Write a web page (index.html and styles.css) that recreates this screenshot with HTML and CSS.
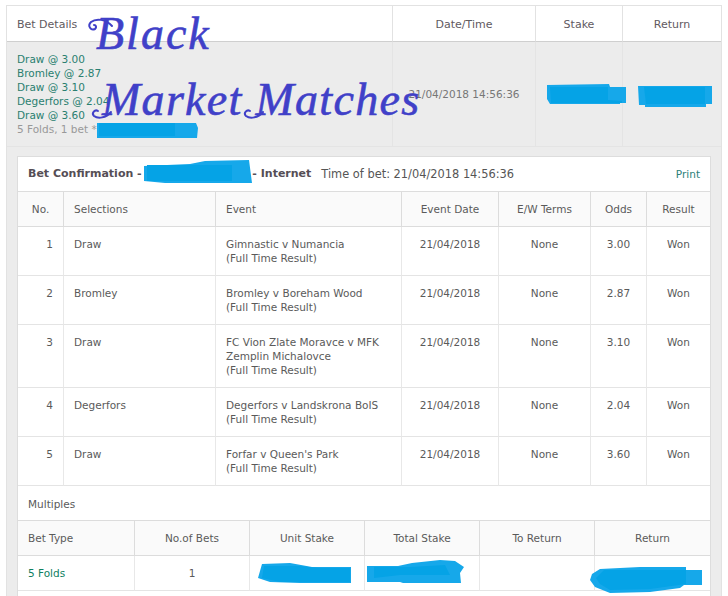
FILE: index.html
```html
<!DOCTYPE html>
<html lang="en">
<head>
<meta charset="utf-8">
<title>Bet Details</title>
<link rel="stylesheet" href="styles.css">
</head>
<body>
<main class="page">
  <table class="summary">
    <colgroup><col class="s1"><col class="s2"><col class="s3"><col class="s4"></colgroup>
    <thead>
      <tr><th class="left">Bet Details</th><th>Date/Time</th><th>Stake</th><th>Return</th></tr>
    </thead>
    <tbody>
      <tr>
        <td class="legs">
          <div class="leg">Draw @ 3.00</div>
          <div class="leg">Bromley @ 2.87</div>
          <div class="leg">Draw @ 3.10</div>
          <div class="leg">Degerfors @ 2.04</div>
          <div class="leg">Draw @ 3.60</div>
          <div class="folds">5 Folds, 1 bet *</div>
        </td>
        <td class="when">21/04/2018 14:56:36</td>
        <td></td>
        <td></td>
      </tr>
    </tbody>
  </table>

  <section class="panel">
    <header class="panel-title">
      <strong class="bet-name">Bet Confirmation - <span class="hidden-id"></span> - Internet</strong>
      <span class="bet-time">Time of bet: 21/04/2018 14:56:36</span>
      <a class="print">Print</a>
    </header>

    <table class="grid">
      <colgroup><col class="c1"><col class="c2"><col class="c3"><col class="c4"><col class="c5"><col class="c6"><col class="c7"></colgroup>
      <thead>
        <tr><th>No.</th><th class="left">Selections</th><th class="left">Event</th><th>Event Date</th><th>E/W Terms</th><th>Odds</th><th>Result</th></tr>
      </thead>
      <tbody>
        <tr><td class="num">1</td><td>Draw</td><td>Gimnastic v Numancia<br>(Full Time Result)</td><td class="mid">21/04/2018</td><td class="mid">None</td><td class="mid">3.00</td><td class="mid">Won</td></tr>
        <tr><td class="num">2</td><td>Bromley</td><td>Bromley v Boreham Wood<br>(Full Time Result)</td><td class="mid">21/04/2018</td><td class="mid">None</td><td class="mid">2.87</td><td class="mid">Won</td></tr>
        <tr><td class="num">3</td><td>Draw</td><td>FC Vion Zlate Moravce v MFK Zemplin Michalovce<br>(Full Time Result)</td><td class="mid">21/04/2018</td><td class="mid">None</td><td class="mid">3.10</td><td class="mid">Won</td></tr>
        <tr><td class="num">4</td><td>Degerfors</td><td>Degerfors v Landskrona BoIS<br>(Full Time Result)</td><td class="mid">21/04/2018</td><td class="mid">None</td><td class="mid">2.04</td><td class="mid">Won</td></tr>
        <tr><td class="num">5</td><td>Draw</td><td>Forfar v Queen's Park<br>(Full Time Result)</td><td class="mid">21/04/2018</td><td class="mid">None</td><td class="mid">3.60</td><td class="mid">Won</td></tr>
      </tbody>
    </table>

    <div class="multiples">Multiples</div>

    <table class="grid">
      <colgroup><col class="m1"><col class="m2"><col class="m2"><col class="m2"><col class="m2"><col class="m2"></colgroup>
      <thead>
        <tr><th class="left">Bet Type</th><th>No.of Bets</th><th>Unit Stake</th><th>Total Stake</th><th>To Return</th><th>Return</th></tr>
      </thead>
      <tbody>
        <tr><td class="green">5 Folds</td><td class="mid">1</td><td></td><td></td><td></td><td></td></tr>
      </tbody>
    </table>
  </section>
</main>

<div class="watermark">
  <span class="wm-black">Black</span>
  <span class="wm-market">Market Matches</span>
</div>

<svg class="scribbles" width="728" height="596" viewBox="0 0 728 596" aria-hidden="true">
  <g class="ink-light">
    <path d="M97 123H196L198 128L197 138H97Z"/>
    <path d="M144 166L190 164L205 161L249 160L252 183H165L144 181Z"/>
    <path d="M547 85L609 84L610 87H626V103H620V104H550L547 99Z"/>
    <path d="M638 86H712V104H706V107H645V105H639Z"/>
    <path d="M262 564L290 563L312 567H351V583H300L270 582L258 578Z"/>
    <path d="M367 566H398L412 563L440 560L455 561L464 567L460 573L461 583H403L400 582H367Z"/>
    <path d="M600 569L640 567H686V570H702V585H684L680 588L650 592L610 593L595 587L590 580L592 574Z"/>
  </g>
  <g class="ink-dark">
    <path d="M99 123H175V136H99Z"/>
    <path d="M147 165H232V181H147Z"/>
    <path d="M550 87H608V100L622 101V103H551Z"/>
    <path d="M644 87H705V104H646Z"/>
    <path d="M264 566H300L318 568H350V582H280L262 578Z"/>
    <path d="M374 567H410L445 565L450 575H400L374 578Z"/>
    <path d="M604 570H686V584L650 589L610 590L600 584L596 578Z"/>
  </g>
  <g class="swash">
    <path d="M112 26C106 19 96 18 91 22C87 26 91 31 95 29C97 27 96 25 94 25"/>
    <path d="M111 112C106 118 98 119 94 116C91 113 95 109 98 111"/>
    <path d="M263 112C258 118 250 119 246 116C243 113 247 109 250 111"/>
  </g>
</svg>
</body>
</html>
```

FILE: styles.css
```css
* {
  box-sizing: border-box;
}

html,
body {
  margin: 0;
  height: 596px;
  overflow: hidden;
  background: #fff;
}

body {
  position: relative;
  font-family: "DejaVu Sans", Verdana, sans-serif;
  font-size: 10.5px;
  line-height: 14px;
  color: #5a5a5a;
}

.page {
  width: 716px;
  height: 591px;
  margin: 5px 0 0 6px;
  background: #ececec;
  border: 1px solid #e2e2e2;
  border-bottom: 0;
  overflow: hidden;
}

table {
  width: 100%;
  table-layout: fixed;
  border-collapse: separate;
  border-spacing: 0;
}

th {
  font-weight: normal;
  text-align: center;
}

th.left {
  text-align: left;
}

/* Summary strip */
.s1 { width: 386px; }
.s2 { width: 143px; }
.s3 { width: 87px; }
.s4 { width: 98px; }

.summary th {
  height: 36px;
  padding: 2px 10px 0;
  background: #fff;
  border-bottom: 1px solid #cfcfcf;
  border-right: 1px solid #e2e2e2;
  font-size: 11px;
  color: #5f5a5f;
}

.summary th:last-child,
.summary td:last-child {
  border-right: 0;
}

.summary td {
  padding: 10px;
  border-right: 1px solid #e4e4e4;
  border-bottom: 1px solid #e4e4e4;
  vertical-align: middle;
}

.leg {
  color: #2a7f70;
}

.folds {
  color: #999;
}

.when {
  text-align: center;
  color: #777;
}

/* Confirmation panel */
.panel {
  width: 694px;
  height: 440px;
  margin: 9px 0 0 10px;
  background: #fff;
  border: 1px solid #ddd;
  border-bottom: 0;
}

.panel-title {
  display: flex;
  align-items: center;
  height: 35px;
  padding: 0 10px;
  border-bottom: 1px solid #ddd;
  font-size: 11.4px;
  color: #555;
}

.bet-name {
  font-size: 11px;
  color: #554e55;
}

.hidden-id {
  display: inline-block;
  width: 103px;
}

.bet-time {
  margin-left: 10px;
}

.print {
  margin-left: auto;
  font-size: 10.5px;
  color: #2a8078;
}

.c1 { width: 46px; }
.c2 { width: 152px; }
.c3 { width: 186px; }
.c4 { width: 97px; }
.c5 { width: 92px; }
.c6 { width: 56px; }
.c7 { width: 63px; }

.m1 { width: 117px; }
.m2 { width: 115px; }

.grid th {
  padding: 10px;
  background: #fafafa;
  border-right: 1px solid #dcdcdc;
  border-bottom: 1px solid #dcdcdc;
  white-space: nowrap;
}

.grid td {
  padding: 10px;
  border-right: 1px solid #e8e8e8;
  border-bottom: 1px solid #e4e4e4;
  vertical-align: top;
}

.grid th:last-child,
.grid td:last-child {
  border-right: 0;
}

.grid td.num {
  text-align: right;
}

.grid td.mid {
  text-align: center;
}

.grid td.green {
  color: #0f7f5f;
}

.multiples {
  height: 35px;
  padding: 11px 10px 10px;
  border-bottom: 1px solid #dcdcdc;
}

/* Overlays drawn on top of the page */
.watermark {
  position: absolute;
  inset: 0;
  pointer-events: none;
  font-family: "Liberation Serif", serif;
  font-style: italic;
  color: #4040c8;
  -webkit-text-stroke: 0.6px #4040c8;
  white-space: nowrap;
}

.wm-black {
  position: absolute;
  left: 96px;
  top: 9px;
  font-size: 46px;
  line-height: 50px;
  letter-spacing: 2px;
}

.wm-market {
  position: absolute;
  left: 102px;
  top: 75px;
  font-size: 46px;
  line-height: 50px;
  letter-spacing: 1.3px;
}

.scribbles {
  position: absolute;
  left: 0;
  top: 0;
  pointer-events: none;
}

.ink-light path {
  fill: #16a8ea;
}

.ink-dark path {
  fill: #05a3e6;
}

.swash path {
  fill: none;
  stroke: #4040c8;
  stroke-width: 2;
  stroke-linecap: round;
}
```
